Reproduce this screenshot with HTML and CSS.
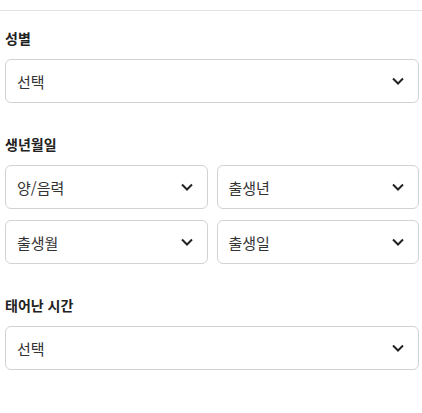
FILE: index.html
```html
<!DOCTYPE html>
<html lang="ko">
<head>
    <meta charset="UTF-8">
    <meta name="viewport" content="width=device-width, initial-scale=1.0">
    <title>사주 정보 입력</title>
    <link rel="stylesheet" href="styles.css">
</head>
<body>
    <div class="divider"></div>
    <form class="profile-form">
        <div class="field">
            <label class="field-label">성별</label>
            <div class="select">
                <span>선택</span>
                <svg class="chevron" viewBox="0 0 12 8"><path d="M1 1.5l5 5 5-5"/></svg>
            </div>
        </div>

        <div class="field">
            <label class="field-label">생년월일</label>
            <div class="select-grid">
                <div class="select">
                    <span>양/음력</span>
                    <svg class="chevron" viewBox="0 0 12 8"><path d="M1 1.5l5 5 5-5"/></svg>
                </div>
                <div class="select">
                    <span>출생년</span>
                    <svg class="chevron" viewBox="0 0 12 8"><path d="M1 1.5l5 5 5-5"/></svg>
                </div>
                <div class="select">
                    <span>출생월</span>
                    <svg class="chevron" viewBox="0 0 12 8"><path d="M1 1.5l5 5 5-5"/></svg>
                </div>
                <div class="select">
                    <span>출생일</span>
                    <svg class="chevron" viewBox="0 0 12 8"><path d="M1 1.5l5 5 5-5"/></svg>
                </div>
            </div>
        </div>

        <div class="field">
            <label class="field-label">태어난 시간</label>
            <div class="select">
                <span>선택</span>
                <svg class="chevron" viewBox="0 0 12 8"><path d="M1 1.5l5 5 5-5"/></svg>
            </div>
        </div>
    </form>
</body>
</html>
```

FILE: styles.css
```css
body {
    font-family: "Noto Sans CJK KR", "Noto Sans", sans-serif;
    background: #fff;
    margin: 0;
    color: #333;
}

.divider {
    margin-top: 10px;
    height: 1px;
    background: #e3e3e3;
}

.profile-form {
    padding: 0 3px 0 5px;
}

.field {
    margin-top: 31px;
}

.field:first-child {
    margin-top: 17px;
}

.field-label {
    display: block;
    font-size: 14px;
    font-weight: bold;
    line-height: 20px;
    color: #222;
    margin-bottom: 11px;
}

.select-grid {
    display: grid;
    grid-template-columns: 1fr 1fr;
    column-gap: 9px;
    row-gap: 11px;
}

.select {
    display: flex;
    align-items: center;
    justify-content: space-between;
    box-sizing: border-box;
    height: 44px;
    padding: 0 14px 0 11px;
    border: 1px solid #d2d2d2;
    border-radius: 6px;
    font-size: 15px;
    color: #333;
}

.chevron {
    width: 12px;
    height: 8px;
    fill: none;
    stroke: #222;
    stroke-width: 2;
}
```
